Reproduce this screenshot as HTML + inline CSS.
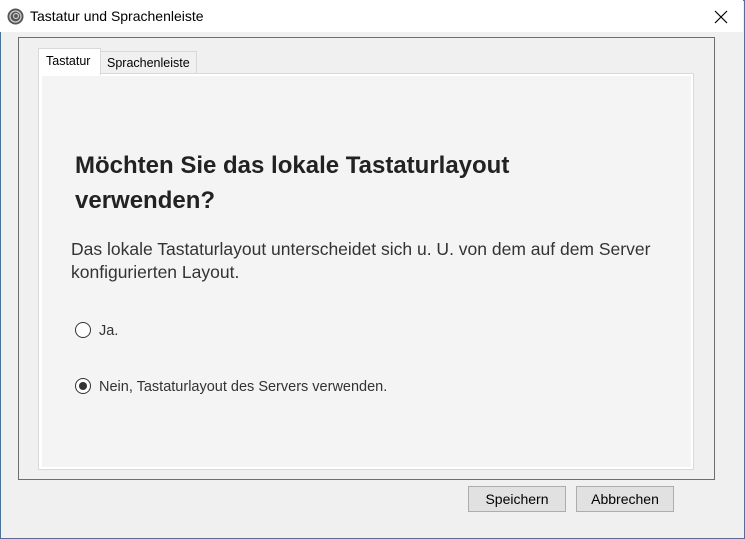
<!DOCTYPE html>
<html><head><meta charset="utf-8"><style>
*{margin:0;padding:0;box-sizing:border-box}
body{width:745px;height:539px;background:#f0f0f0;font-family:"Liberation Sans",sans-serif;position:relative;overflow:hidden}
.win{position:absolute;left:0;top:0;width:745px;height:539px;border:1px solid #2b79c8}
.title{position:absolute;left:0;top:0;width:743px;height:32px;background:#fff}
.title span{position:absolute;left:30px;top:8px;font-size:14px;color:#000}
.grp{position:absolute;left:18px;top:37px;width:697px;height:443px;border:1px solid #6e6e6e}
.tab{position:absolute;font-size:12.5px;color:#000;border:1px solid #d9d9d9;border-bottom:none}
.panel{position:absolute;left:38px;top:73px;width:656px;height:397px;border:1px solid #d9d9d9;background:#fff}
.inner{position:absolute;left:3px;top:2px;right:2px;bottom:2px;background:#f4f4f4}
h1{position:absolute;left:75px;top:148px;font-size:24px;line-height:35px;font-weight:bold;color:#222;width:470px}
p{position:absolute;left:71px;top:238px;font-size:17.5px;line-height:23px;color:#333;width:610px}
.r{position:absolute;font-size:14.5px;color:#333}
.rb{position:absolute;width:16px;height:16px;border:1.5px solid #333;border-radius:50%;background:#fff}
.btn{position:absolute;top:486px;height:26px;background:#e1e1e1;border:1px solid #adadad;font-size:14px;text-align:center;line-height:24px;color:#000}
</style></head><body>
<div class="win"></div>
<div class="title">
<svg style="position:absolute;left:7px;top:8px" width="17" height="17" viewBox="0 0 17 17"><circle cx="8.5" cy="8.5" r="8" fill="#555"/><circle cx="8.5" cy="8.5" r="5.5" fill="none" stroke="#ccc" stroke-width="1.3"/><circle cx="9" cy="8" r="2.5" fill="none" stroke="#ccc" stroke-width="1.2"/></svg>
<span>Tastatur und Sprachenleiste</span>
<svg style="position:absolute;left:714px;top:10px" width="14" height="14"><path d="M1 1L13 13M13 1L1 13" stroke="#000" stroke-width="1.2"/></svg>
</div>
<div class="grp"></div>
<div class="tab" style="left:100px;top:51px;width:97px;height:23px;background:#f0f0f0;padding:4px 0 0 6px">Sprachenleiste</div>
<div class="panel"><div class="inner"></div></div>
<div class="tab" style="left:38px;top:48px;width:63px;height:27px;background:#fff;padding:5px 0 0 7px;border-bottom:none">Tastatur</div>
<h1>Möchten Sie das lokale Tastaturlayout verwenden?</h1>
<p>Das lokale Tastaturlayout unterscheidet sich u. U. von dem auf dem Server konfigurierten Layout.</p>
<div class="rb" style="left:75px;top:322px"></div>
<div class="r" style="left:99px;top:323px">Ja.</div>
<div class="rb" style="left:75px;top:378px"><div style="position:absolute;left:2.5px;top:2.5px;width:8px;height:8px;border-radius:50%;background:#333"></div></div>
<div class="r" style="left:99px;top:379px">Nein, Tastaturlayout des Servers verwenden.</div>
<div class="btn" style="left:468px;width:98px">Speichern</div>
<div class="btn" style="left:576px;width:98px">Abbrechen</div>
</body></html>
